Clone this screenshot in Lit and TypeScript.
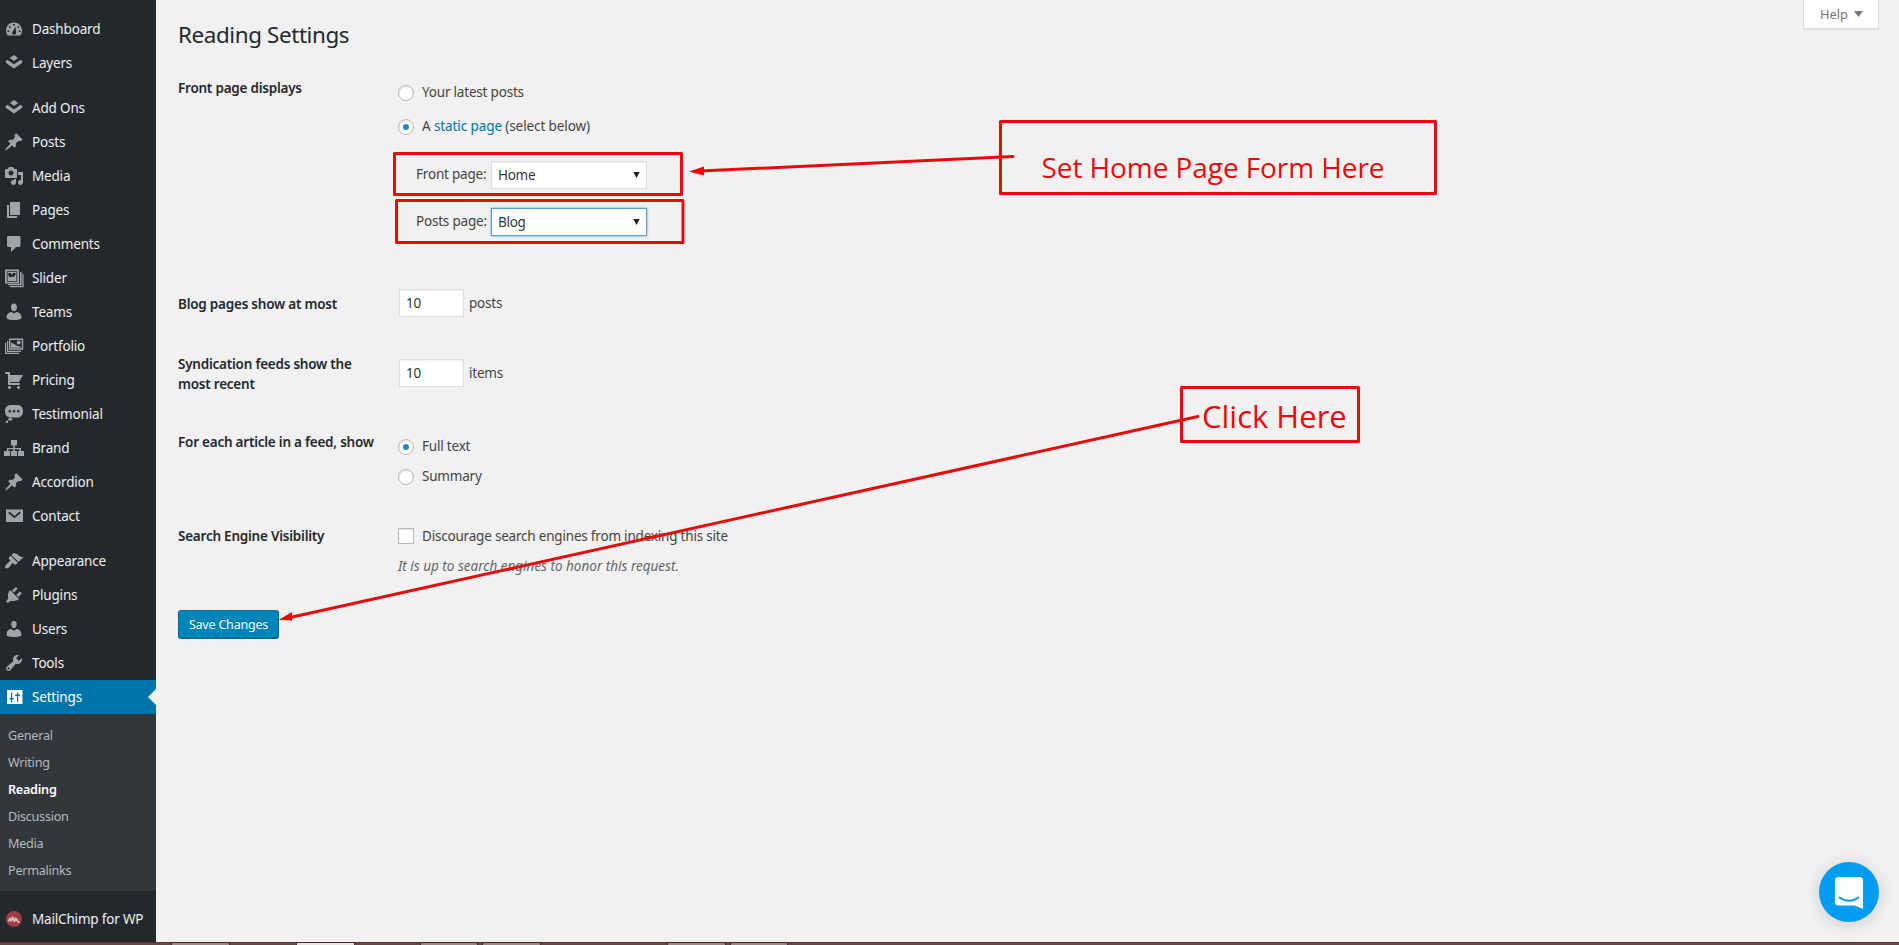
import { LitElement, html, svg, css } from "lit";
import { customElement } from "lit/decorators.js";
import { classMap } from "lit/directives/class-map.js";

const pin = svg`<path d="M10.44 3.02l1.82-1.82 6.36 6.35-1.83 1.82c-1.05-.68-2.48-.57-3.41.36l-.75.75c-.92.93-1.04 2.35-.35 3.41l-1.83 1.82-2.41-2.41-2.8 2.79c-.42.42-3.38 2.71-3.8 2.29s1.86-3.39 2.28-3.81l2.79-2.79L4.1 9.36l1.83-1.82c1.05.69 2.48.57 3.4-.36l.75-.75c.93-.92 1.05-2.35.36-3.41z"/>`;
const layers = svg`<path d="M10 2l4.2 3L10 8 5.8 5z"/><path d="M3.4 8.8L10 13.4l6.600-4.600" fill="none" stroke="currentColor" stroke-width="3.400" stroke-linecap="round"/>`;
const user = svg`<path d="M10 9.250c-2.270 0-2.730-3.440-2.730-3.440C7 4.020 7.820 2 9.970 2c2.160 0 2.980 2.020 2.710 3.810 0 0-.41 3.440-2.680 3.440zm0 2.570L12.720 10c2.390 0 4.520 2.330 4.520 4.530v2.490s-3.650 1.130-7.240 1.130c-3.650 0-7.240-1.130-7.240-1.130v-2.490c0-2.250 1.940-4.480 4.470-4.480z"/>`;

const icons: Record<string, unknown> = {
  dashboard: svg`<path fill-rule="evenodd" d="M3.760 16.500h12.480c1.100-1.370 1.760-3 1.760-4.800C18 7 14.420 3.500 10 3.500s-8 3.500-8 8.200c0 1.800.66 3.430 1.760 4.800zM9 5.800a1 1 0 1 1 2 0 1 1 0 0 1-2 0zM4.800 7.900a1 1 0 1 1 2 0 1 1 0 0 1-2 0zM13.400 7.900a1 1 0 1 1 2 0 1 1 0 0 1-2 0zM3.300 12.200a1 1 0 1 1 2 0 1 1 0 0 1-2 0zM14.700 12.200a1 1 0 1 1 2 0 1 1 0 0 1-2 0zM11.300 7.500l.9 6.100c.1 1.300-.9 2.200-2.100 2.200-1.300 0-2.200-1.100-2-2.300.2-1 .9-1.500 1.400-2.300z"/>`,
  layers,
  pin,
  media: svg`<path d="M13 11V4c0-.55-.45-1-1-1h-1.670L9 1H5L3.670 3H2c-.55 0-1 .45-1 1v7c0 .55.45 1 1 1h10c.55 0 1-.45 1-1zM7 4.500c1.380 0 2.500 1.120 2.500 2.500S8.380 9.500 7 9.500 4.500 8.380 4.500 7 5.620 4.500 7 4.500zM14 6h5v10.500c0 1.380-1.120 2.500-2.500 2.500S14 17.880 14 16.500s1.120-2.500 2.500-2.500c.17 0 .34.02.5.05V9h-3V6zm-4 8.050V13h2v3.500c0 1.380-1.120 2.500-2.500 2.500S7 17.880 7 16.500 8.120 14 9.500 14c.17 0 .34.02.5.05z"/>`,
  pages: svg`<path d="M6 15V2h10v13H6zm-1 1h8v2H3V5h2v11z"/>`,
  comments: svg`<path d="M4.500 2h10.500c.8 0 1.500.6 1.500 1.400v8.200c0 .8-.7 1.400-1.500 1.400h-3l-5 5v-5H4.500C3.700 13 3 12.400 3 11.600V3.400C3 2.600 3.700 2 4.500 2z"/>`,
  slider: svg`<path fill-rule="evenodd" d="M1 1.500h14v14H1zM2.800 3.300v10.400h10.400V3.300z"/><path fill-rule="evenodd" d="M3.600 4.100h8.800v8.800H3.600zM4.300 7.500l1.700 1.800 1.600-.6 2.200 .3 1.800-2.600V4.900h-2.400l-.8 1.500-1.300-.2-.3-1.300H4.300z"/><path d="M16 4h1.600v13.200H4V15.900h12zM18.300 6.300H19.600v13H6v-1.200h12.300z"/>`,
  team: svg`<path d="M10 1.600c1.900 0 3 1.500 3 3.600S11.800 9.200 10 9.200 7 7.300 7 5.200s1.100-3.600 3-3.600zM7.400 10L10 11.600 12.600 10c2.800.2 4.900 2.600 4.900 5.200 0 1.600-1.500 2.800-7.500 2.800s-7.500-1.200-7.500-2.800c0-2.600 2.100-5 4.900-5.200z"/>`,
  portfolio: svg`<path fill-rule="evenodd" d="M5 2.500h14.200v11.200H5zM6.400 3.900v8.400h11.400V3.900z"/><path d="M7 6.200l2.600 1.500 4 2.400 3.500.6v1H7z"/><circle cx="14.700" cy="6.600" r="2"/><path d="M3 4.700h1.200v10H17v1.200H3zM1 6.700h1.200v10.100H15V18H1z"/>`,
  cart: svg`<path d="M6 13h9c.55 0 1 .45 1 1s-.45 1-1 1H5c-.55 0-1-.45-1-1V4H2c-.55 0-1-.45-1-1s.45-1 1-1h3c.55 0 1 .45 1 1v2h13l-4 7H6v1zm-.5 3c.83 0 1.500.67 1.500 1.500S6.330 19 5.500 19 4 18.330 4 17.500 4.670 16 5.500 16zm9 0c.83 0 1.500.67 1.500 1.500s-.67 1.500-1.500 1.500-1.500-.67-1.500-1.500.67-1.500 1.500-1.500z"/>`,
  testimonial: svg`<path fill-rule="evenodd" d="M7 1h6.500C17 1 19 3.500 19 7.200S17 13.500 13.500 13.500H7C3 13.500 1 11 1 7.200S3 1 7 1zM4.400 7.300a1.300 1.300 0 1 0 2.600 0 1.300 1.300 0 0 0-2.600 0zM8.700 7.300a1.300 1.300 0 1 0 2.600 0 1.300 1.300 0 0 0-2.600 0zM13 7.300a1.300 1.300 0 1 0 2.600 0 1.300 1.300 0 0 0-2.600 0z"/><ellipse cx="6.200" cy="15.300" rx="2" ry="1.500"/><circle cx="3" cy="17.800" r="1.200"/>`,
  brand: svg`<path d="M7 2h6v5.500h-2.200V10H17v3h3v5h-6v-5h1.500v-1.700h-4.700V13H13v5H7v-5h2.200v-1.700H4.500V13H6v5H0v-5h3v-3h6.200V7.500H7z"/>`,
  mail: svg`<path d="M2 3.500h17v12.500H2z"/><path class="cut" d="M4.800 6.300l5.700 4.800 5.700-4.800" fill="none" stroke-width="1.800"/>`,
  appearance: svg`<path d="M14.480 11.060L7.410 3.990l1.500-1.500c.5-.56 2.300-.47 3.510.32 1.210.8 1.430 1.280 2.910 2.100 1.180.64 2.450 1.260 4.450.85zm-.71.71L6.700 4.700 4.930 6.470c-.39.39-.39 1.020 0 1.410l1.060 1.060c.39.39.39 1.030 0 1.420-.6.6-1.430 1.110-2.210 1.690-.35.26-.7.53-1.010.84C1.430 14.230.4 16.080 1.400 17.070c.99 1 2.840-.03 4.180-1.360.31-.31.58-.66.85-1.020.57-.78 1.080-1.610 1.690-2.210.39-.39 1.020-.39 1.410 0l1.060 1.060c.39.39 1.020.39 1.410 0z"/>`,
  plugins: svg`<path d="M13.110 4.360L9.870 7.600 8 5.730l3.240-3.240c.35-.34 1.050-.2 1.560.32.52.51.66 1.210.31 1.550zm-8 1.770l.91-1.120 9.010 9.010-1.190.84c-.71.71-2.630 1.160-3.820 1.160H6.140L4.900 17.260c-.59.59-1.540.59-2.120 0-.59-.58-.59-1.530 0-2.120l1.240-1.240v-3.880c0-1.130.4-3.190 1.090-3.890zm7.260 3.970l3.240-3.240c.34-.35 1.040-.21 1.550.31.52.51.66 1.210.31 1.550l-3.240 3.250z"/>`,
  user,
  tools: svg`<path d="M16.680 9.770c-1.340 1.340-3.300 1.670-4.950.99l-5.410 6.520c-.99.99-2.590.99-3.580 0s-.99-2.590 0-3.570l6.520-5.420c-.68-1.650-.35-3.610.99-4.950 1.280-1.280 3.120-1.620 4.720-1.060l-2.890 2.890 2.820 2.820 2.860-2.870c.53 1.580.18 3.390-1.080 4.650zM3.810 16.210c.4.39 1.040.39 1.430 0 .4-.4.4-1.040 0-1.430-.39-.4-1.030-.4-1.430 0-.39.39-.39 1.030 0 1.430z"/>`,
  settings: svg`<path fill-rule="evenodd" d="M3 3h15.500v14H3zM7 5.500h1.200V11h1.500v1.500H8.200V15H7v-2.500H5.500V11H7zM13 5.500h1.200V7.500h1.800V9h-1.800v6H13V9h-1.800V7.500H13z"/>`,
  chimp: svg`<circle cx="10" cy="10" r="8" fill="#a03c44"/><path d="M4.500 12.500l1.500-3.200 1.200 2.500 1.600-3.600 1.600 4.200 1.300-3.200 2 3 1.800 1.200" fill="none" stroke="#d9b9bb" stroke-width="1.800" stroke-linejoin="round"/>`,
};

type Item = [string, string];
const groups: Item[][] = [
  [["Dashboard", "dashboard"], ["Layers", "layers"]],
  [
    ["Add Ons", "layers"], ["Posts", "pin"], ["Media", "media"], ["Pages", "pages"],
    ["Comments", "comments"], ["Slider", "slider"], ["Teams", "team"], ["Portfolio", "portfolio"],
    ["Pricing", "cart"], ["Testimonial", "testimonial"], ["Brand", "brand"], ["Accordion", "pin"],
    ["Contact", "mail"],
  ],
  [["Appearance", "appearance"], ["Plugins", "plugins"], ["Users", "user"], ["Tools", "tools"], ["Settings", "settings"]],
];
const submenu = ["General", "Writing", "Reading", "Discussion", "Media", "Permalinks"];

@customElement("admin-menu")
class AdminMenu extends LitElement {
  static styles = css`
    :host { display: flex; flex-direction: column; width: 156px; height: 942px; box-sizing: border-box; padding-top: 12px; background: #23282d; color: #eee; font-size: 13.5px; letter-spacing: -0.18px; }
    .group { display: flex; flex-direction: column; margin-bottom: 11px; }
    .group.last { margin-bottom: 0; }
    .item { display: flex; align-items: center; height: 34px; padding-left: 4px; gap: 8px; white-space: nowrap; position: relative; }
    .item svg { width: 20px; height: 20px; fill: currentColor; color: #9fa4a9; flex: none; }
    .cut { stroke: #23282d; }
    .current { background: #0073aa; color: #fff; }
    .current svg { color: #fff; }
    .current::after { content: ""; position: absolute; right: 0; top: 9px; border: 8px solid transparent; border-right-color: #f1f1f1; border-left-width: 0; }
    .sub { background: #32373c; height: 162px; padding: 8px 8px 7px; margin-bottom: 11px; font-size: 12.6px; letter-spacing: -0.24px; color: #b4b9be; }
    .sub div { height: 27px; line-height: 28px; }
    .sub .on { color: #fff; font-weight: 600; }
  `;
  render() {
    const item = ([label, icon]: Item) => html`
      <div class=${classMap({ item: true, current: label === "Settings" })}>
        <svg viewBox="0 0 20 20">${icons[icon]}</svg><span>${label}</span>
      </div>`;
    return html`
      ${groups.map((g, i) => html`<div class=${classMap({ group: true, last: i === 2 })}>${g.map(item)}</div>`)}
      <div class="sub">${submenu.map((s) => html`<div class=${classMap({ on: s === "Reading" })}>${s}</div>`)}</div>
      ${item(["MailChimp for WP", "chimp"])}
    `;
  }
}

@customElement("reading-form")
class ReadingForm extends LitElement {
  static styles = css`
    :host { display: block; padding: 19px 0 0 22px; color: #444; font-size: 13.5px; letter-spacing: -0.2px; white-space: nowrap; }
    h1 { margin: 0; font-size: 22.4px; font-weight: 400; line-height: 31px; letter-spacing: -0.38px; color: #23282d; }
    .row { display: grid; grid-template-columns: 220px auto; line-height: 20px; }
    .name { font-weight: 600; color: #23282d; letter-spacing: -0.23px; }
    .cell { display: flex; flex-direction: column; align-items: flex-start; }
    .opt { display: flex; align-items: center; gap: 8px; height: 20px; }
    .radio { box-sizing: border-box; width: 16px; height: 16px; border: 1px solid #b4b9be; border-radius: 50%; background: #fff; box-shadow: inset 0 1px 2px rgba(0,0,0,.1); display: grid; place-items: center; margin-top: 2px; }
    .radio.on::after { content: ""; width: 6px; height: 6px; border-radius: 50%; background: #1e8cbe; }
    .check { box-sizing: border-box; width: 16px; height: 16px; border: 1px solid #b4b9be; background: #fff; box-shadow: inset 0 1px 2px rgba(0,0,0,.1); }
    a { color: #0073aa; }
    .wide { letter-spacing: -0.1px; }
    .pick { display: flex; margin-left: 18px; height: 28px; gap: 4px; }
    .pick.front { margin-top: 25px; }
    .pick.posts { margin-top: 19px; }
    .pick label { width: 71px; line-height: 26px; letter-spacing: -0.2px; }
    .select { box-sizing: border-box; width: 156px; height: 28px; border: 1px solid #ddd; background: #fff; color: #32373c; display: flex; align-items: center; justify-content: space-between; padding: 0 6px; letter-spacing: -0.3px; box-shadow: inset 0 1px 2px rgba(0,0,0,.07); }
    .select.focus { border-color: #5b9dd9; box-shadow: 0 0 2px rgba(30,140,190,.8); }
    .select svg { width: 7px; height: 6px; fill: #222; }
    .num { display: flex; gap: 5px; padding-left: 1px; }
    .num span { line-height: 28px; letter-spacing: -0.2px; }
    .num div { box-sizing: border-box; width: 65px; height: 28px; line-height: 27px; border: 1px solid #ddd; background: #fff; padding-left: 6px; color: #32373c; letter-spacing: -0.3px; box-shadow: inset 0 1px 2px rgba(0,0,0,.07); }
    .r1 { padding-top: 29px; height: 195px; }
    .r1 .name { margin-top: -1px; }
    .r2, .r3 { height: 70px; }
    .r4 { height: 94px; }
    .r5 { height: 102px; }
    .first { padding-top: 3px; }
    .gap14 { margin-top: 14px; }
    .gap10 { margin-top: 10px; }
    .t10 { padding-top: 10px; }
    .t15 { padding-top: 15px; }
    .t18 { padding-top: 18px; }
    .t20 { padding-top: 20px; }
    .t22 { padding-top: 22px; }
    .hint { font-style: italic; color: #666; letter-spacing: 0; margin-top: 10px; }
    .save { display: inline-flex; align-items: center; justify-content: center; box-sizing: border-box; width: 101px; height: 29px; background: #0085ba; border: 1px solid #006799; border-top-color: #0073aa; border-bottom-width: 2px; border-radius: 3px; color: #fff; font-size: 12.5px; letter-spacing: -0.2px; text-shadow: 0 -1px 1px #006799; }
  `;
  render() {
    const radio = (on: boolean) => html`<span class=${classMap({ radio: true, on })}></span>`;
    const select = (v: string, focus: boolean) => html`<div class=${classMap({ select: true, focus })}>${v}<svg viewBox="0 0 7 6"><path d="M.3 0h6.400L3.500 6z"/></svg></div>`;
    return html`
      <h1>Reading Settings</h1>
      <div class="row r1">
        <div class="name">Front page displays</div>
        <div class="cell">
          <div class="opt first">${radio(false)}<span>Your latest posts</span></div>
          <div class="opt gap14">${radio(true)}<span class="wide">A <a>static page</a> (select below)</span></div>
          <div class="pick front"><label>Front page:</label>${select("Home", false)}</div>
          <div class="pick posts"><label>Posts page:</label>${select("Blog", true)}</div>
        </div>
      </div>
      <div class="row r2">
        <div class="name t20">Blog pages show at most</div>
        <div class="cell t15"><div class="num"><div>10</div><span>posts</span></div></div>
      </div>
      <div class="row r3">
        <div class="name t10">Syndication feeds show the<br>most recent</div>
        <div class="cell t15"><div class="num"><div>10</div><span>items</span></div></div>
      </div>
      <div class="row r4">
        <div class="name t18">For each article in a feed, show</div>
        <div class="cell t22">
          <div class="opt">${radio(true)}<span>Full text</span></div>
          <div class="opt gap10">${radio(false)}<span>Summary</span></div>
        </div>
      </div>
      <div class="row r5">
        <div class="name t18">Search Engine Visibility</div>
        <div class="cell t18">
          <div class="opt"><span class="check"></span><span>Discourage search engines from indexing this site</span></div>
          <div class="hint">It is up to search engines to honor this request.</div>
        </div>
      </div>
      <div class="save">Save Changes</div>
    `;
  }
}

@customElement("app-root")
class AppRoot extends LitElement {
  static styles = css`
    :host { display: grid; grid-template: 942px 3px / 156px 1fr; width: 100%; height: 945px; overflow: hidden; position: relative; background: #f1f1f1; font-family: "Noto Sans", "Open Sans", sans-serif; }
    .help { position: absolute; right: 20px; top: 0; box-sizing: border-box; width: 76px; height: 29px; background: #fff; border: 1px solid #ddd; border-top: 0; box-shadow: 0 1px 1px rgba(0,0,0,.06); color: #72777c; font-size: 12.8px; line-height: 27px; padding-left: 16px; display: flex; gap: 6px; align-items: center; }
    .help svg { width: 9px; height: 6px; fill: #72777c; margin-top: -1px; }
    .marks { position: absolute; left: 0; top: 0; width: 1899px; height: 945px; }
    .line { fill: none; stroke: #e60c0c; stroke-width: 3; stroke-linejoin: round; stroke-linecap: round; }
    .head { fill: #f60303; }
    .note { fill: #e60c0c; font-family: "Open Sans", sans-serif; }
    .big { font-size: 28px; letter-spacing: -0.08px; }
    .click { font-size: 31px; }
    .chat { position: absolute; left: 1819px; top: 862px; width: 60px; height: 60px; border-radius: 50%; background: #039cee; box-shadow: 0 2px 16px rgba(0,0,0,.16); }
    .taskbar { grid-column: 1 / 3; display: block; width: 100%; height: 3px; background: #6a4640; }
  `;
  render() {
    const tabs = [[171, 59], [296, 59], [420, 58], [482, 59], [667, 59], [730, 58]];
    return html`
      <admin-menu></admin-menu>
      <reading-form></reading-form>
      <svg class="taskbar" viewBox="0 0 1899 3">
        <rect width="1899" height="1" fill="#5c3c38"/>
        ${tabs.map(([x, w], i) => svg`<rect x=${x} y="0" width=${w} height="3" fill="#3f2a28"/><rect x=${x + 1} y="1" width=${w - 2} height="2" fill=${i === 1 ? "#e9e2e0" : "#a18380"}/>`)}
      </svg>
      <div class="help">Help<svg viewBox="0 0 9 6"><path d="M0 0h9L4.500 6z"/></svg></div>
      <svg class="marks" viewBox="0 0 1899 945">
        <g class="line">
          <rect x="394.500" y="153.500" width="287" height="41"/>
          <rect x="396.500" y="200.500" width="286.500" height="42"/>
          <rect x="1000.500" y="121.500" width="435" height="72"/>
          <rect x="1181.500" y="387.500" width="177" height="54"/>
          <path d="M1013 156.500L700 171M1198 416.500L290 617.500"/>
        </g>
        <path class="head" d="M689 171.500l15-5v9zM278.500 620l13.500-8v8.500z"/>
        <text class="note big" x="1041.500" y="178">Set Home Page Form Here</text>
        <text class="note click" x="1202" y="427.500">Click Here</text>
      </svg>
      <div class="chat"><svg viewBox="0 0 60 60" width="60" height="60"><path fill="#fff" d="M19.500 15h21a3.500 3.500 0 0 1 3.500 3.500V47l-8.500-3.500h-16A3.500 3.500 0 0 1 16 40V18.500a3.500 3.500 0 0 1 3.500-3.500z"/><path d="M20.500 35.500c5.500 4.300 13.500 4.300 19 0" fill="none" stroke="#039cee" stroke-width="1.800" stroke-linecap="round"/></svg></div>
    `;
  }
}
